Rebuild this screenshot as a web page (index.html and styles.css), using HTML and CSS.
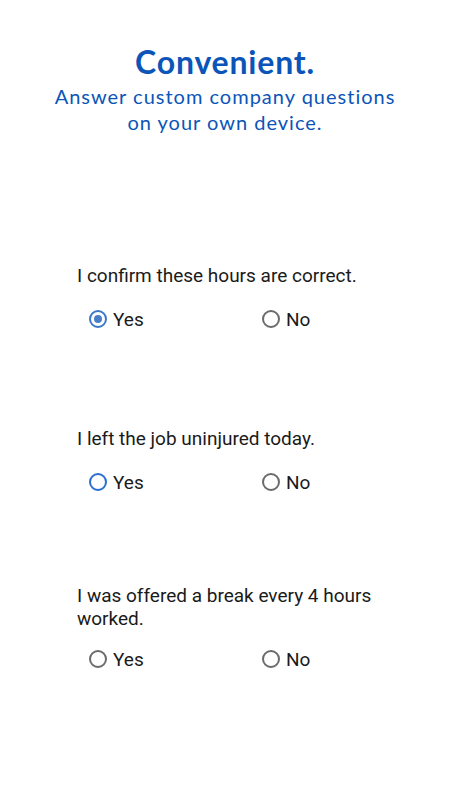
FILE: index.html
```html
<!DOCTYPE html>
<html lang="en">
<head>
<meta charset="utf-8">
<title>Convenient</title>
<link rel="stylesheet" href="styles.css">
</head>
<body>
<main class="screen">
  <header class="hero">
    <h1 class="hero-title">Convenient.</h1>
    <p class="hero-sub">Answer custom company questions<br>on your own device.</p>
  </header>
  <section class="questions">
    <div class="question q1">
      <p class="q-text">I confirm these hours are correct.</p>
      <div class="options">
        <label class="option"><span class="radio checked"></span>Yes</label>
        <label class="option"><span class="radio"></span>No</label>
      </div>
    </div>
    <div class="question q2">
      <p class="q-text">I left the job uninjured today.</p>
      <div class="options">
        <label class="option"><span class="radio focus"></span>Yes</label>
        <label class="option"><span class="radio"></span>No</label>
      </div>
    </div>
    <div class="question q3">
      <p class="q-text">I was offered a break every 4 hours worked.</p>
      <div class="options">
        <label class="option"><span class="radio"></span>Yes</label>
        <label class="option"><span class="radio"></span>No</label>
      </div>
    </div>
  </section>
</main>
</body>
</html>
```
FILE: styles.css
```css
* { box-sizing: border-box; }
html, body { margin: 0; padding: 0; background: #fff; }
.screen { width: 450px; height: 800px; overflow: hidden; }
.hero { text-align: center; padding-top: 44px; color: #0b55b8; }
.hero-title { margin: 0; font-family: Lato, sans-serif; font-weight: 700; font-size: 32px; line-height: 36px; letter-spacing: 0.8px; }
.hero-sub { margin: 3px 0 0; font-family: Lato, sans-serif; font-size: 20px; line-height: 26px; letter-spacing: 1px; color: #0b55b8; }
.questions { padding: 0 30px 0 77px; }
.question { font-family: Roboto, sans-serif; color: #1a1a1a; }
.q1 { margin-top: 129px; }
.q2 { margin-top: 96px; }
.q3 { margin-top: 90px; }
.q-text { margin: 0; font-size: 19px; line-height: 23px; padding-right: 20px; }
.options { display: grid; grid-template-columns: 173px auto; margin-top: 20px; height: 24px; align-items: center; padding-left: 12px; }
.q3 .options { margin-top: 17px; }
.option { display: flex; align-items: center; gap: 6px; font-size: 19px; }
.radio { width: 18px; height: 18px; border-radius: 50%; border: 2px solid #6b6b6b; flex: none; position: relative; }
.radio.focus { border-color: #2a6fd0; }
.radio.checked { border-color: #3b78c9; }
.radio.checked::after { content: ""; position: absolute; left: 3px; top: 3px; width: 8px; height: 8px; border-radius: 50%; background: #4a7fc8; }
```
